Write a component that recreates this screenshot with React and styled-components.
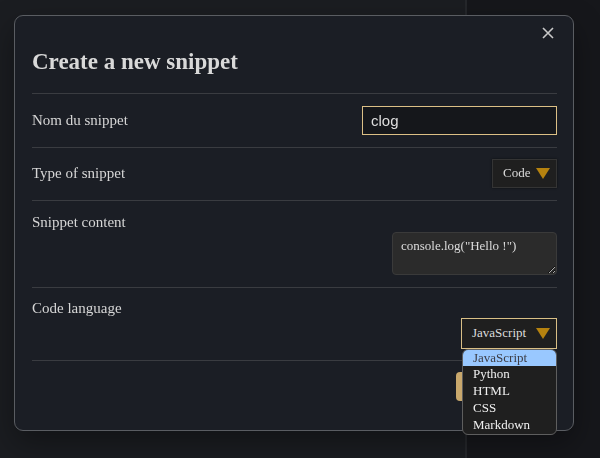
import React from "react"
import styled, { createGlobalStyle } from "styled-components"

const GlobalStyle = createGlobalStyle`
  html, body {
    margin: 0;
    padding: 0;
    background: #1a1c20;
    font-family: "Liberation Serif", "Times New Roman", serif;
  }
`

const Page = styled.div`
  display: grid;
  grid-template-columns: 465px 2px 1fr;
  height: 458px;
`
const Main = styled.div`
  background: #1b1d21;
`
const Divider = styled.div`
  background: #25272b;
`
const Side = styled.div`
  background: #16171b;
`

const Overlay = styled.div`
  position: fixed;
  inset: 0;
  display: flex;
  align-items: flex-start;
  padding: 15px 0 0 14px;
`

const Modal = styled.div`
  width: 560px;
  height: 416px;
  box-sizing: border-box;
  background: #1b1e25;
  border: 1px solid #5a5d62;
  border-radius: 9px;
  padding: 0 16px 0 17px;
  box-shadow: 0 12px 30px rgba(0, 0, 0, 0.35);
  display: flex;
  flex-direction: column;
`

const Header = styled.div`
  display: flex;
  flex-direction: column;
  border-bottom: 1px solid #3a3c41;
  padding-bottom: 17px;
`
const CloseRow = styled.div`
  display: flex;
  justify-content: flex-end;
  padding: 11px 3px 0 0;
`
const Close = styled.button`
  background: none;
  border: 0;
  padding: 0;
  width: 12px;
  height: 12px;
  display: flex;
  cursor: pointer;
`
const Title = styled.h2`
  margin: 10px 0 0;
  font-size: 23px;
  font-weight: 700;
  color: #d9d9d9;
  line-height: 26.6px;
`

const Row = styled.div`
  display: flex;
  flex-direction: ${({ $stacked }) => ($stacked ? "column" : "row")};
  justify-content: space-between;
  align-items: ${({ $stacked }) => ($stacked ? "stretch" : "center")};
  padding: ${({ $pad }) => $pad};
  border-bottom: 1px solid #3a3c41;
`
const Label = styled.span`
  font-size: 15px;
  color: #d6d6d6;
  line-height: 17px;
`
const Control = styled.div`
  display: flex;
  justify-content: flex-end;
  margin-top: ${({ $top }) => $top || 0}px;
`

const Input = styled.input`
  width: 195px;
  height: 29px;
  box-sizing: border-box;
  background: #15171b;
  border: 1px solid #dcc086;
  color: #dedede;
  font-family: "Liberation Sans", Arial, sans-serif;
  font-size: 15px;
  padding: 0 8px;
  outline: none;
`

const SelectWrap = styled.div`
  position: relative;
`
const Select = styled.div`
  width: ${({ $w }) => $w}px;
  height: ${({ $h }) => $h}px;
  box-sizing: border-box;
  background: #1f1f1f;
  border: 1px solid ${({ $focus }) => ($focus ? "#d9bf86" : "#343434")};
  box-shadow: ${({ $focus }) => ($focus ? "none" : "0 0 2px rgba(0,0,0,0.6)")};
  display: flex;
  align-items: center;
  justify-content: space-between;
  padding: 0 6px 0 10px;
  font-size: 13px;
  color: #dcdcdc;
`
const Arrow = () => (
  <svg width="14" height="11" viewBox="0 0 14 11">
    <polygon points="0,0 14,0 7,11" fill="#b5820f" />
  </svg>
)

const Menu = styled.ul`
  position: absolute;
  top: 100%;
  right: 0;
  width: 95px;
  box-sizing: border-box;
  margin: 0;
  padding: 0;
  list-style: none;
  background: #1f1f1f;
  border: 1px solid #5e5e5e;
  border-radius: 6px;
  overflow: hidden;
  z-index: 2;
`
const Option = styled.li`
  font-size: 13px;
  line-height: 16.8px;
  padding: 0 10px;
  color: ${({ $active }) => ($active ? "#3d3d45" : "#f0f0f0")};
  background: ${({ $active }) => ($active ? "#99c8ff" : "transparent")};
`

const TextArea = styled.textarea`
  width: 165px;
  height: 43px;
  box-sizing: border-box;
  background: #2b2b2b;
  border: 1px solid #3a3a3a;
  border-radius: 4px;
  color: #dcdcdc;
  font-family: "Liberation Serif", "Times New Roman", serif;
  font-size: 13px;
  padding: 5px 8px;
  outline: none;
`

const Footer = styled.div`
  display: flex;
  justify-content: flex-end;
  padding-top: 11px;
`
const Button = styled.button`
  width: 101px;
  height: 29px;
  border: 0;
  border-radius: 4px;
  background: #c9a86c;
`

const languages = ["JavaScript", "Python", "HTML", "CSS", "Markdown"]

export default function App() {
  return (
    <>
      <GlobalStyle />
      <Page>
        <Main />
        <Divider />
        <Side />
      </Page>
      <Overlay>
        <Modal>
          <Header>
            <CloseRow>
              <Close aria-label="Close">
                <svg width="12" height="12" viewBox="0 0 12 12">
                  <path d="M1 1L11 11M11 1L1 11" stroke="#c9c9c9" strokeWidth="1.6" />
                </svg>
              </Close>
            </CloseRow>
            <Title>Create a new snippet</Title>
          </Header>
          <Row $pad="12px 0">
            <Label>Nom du snippet</Label>
            <Input defaultValue="clog" />
          </Row>
          <Row $pad="11px 0 12px">
            <Label>Type of snippet</Label>
            <Select $w={65} $h={29}>
              Code <Arrow />
            </Select>
          </Row>
          <Row $stacked $pad="13px 0 12px">
            <Label>Snippet content</Label>
            <Control $top={1}>
              <TextArea defaultValue={'console.log("Hello !")'} />
            </Control>
          </Row>
          <Row $stacked $pad="12px 0 11px">
            <Label>Code language</Label>
            <Control $top={1}>
              <SelectWrap>
                <Select $w={96} $h={31} $focus>
                  JavaScript <Arrow />
                </Select>
                <Menu>
                  {languages.map((l, i) => (
                    <Option key={l} $active={i === 0}>
                      {l}
                    </Option>
                  ))}
                </Menu>
              </SelectWrap>
            </Control>
          </Row>
          <Footer>
            <Button aria-label="Create" />
          </Footer>
        </Modal>
      </Overlay>
    </>
  )
}
